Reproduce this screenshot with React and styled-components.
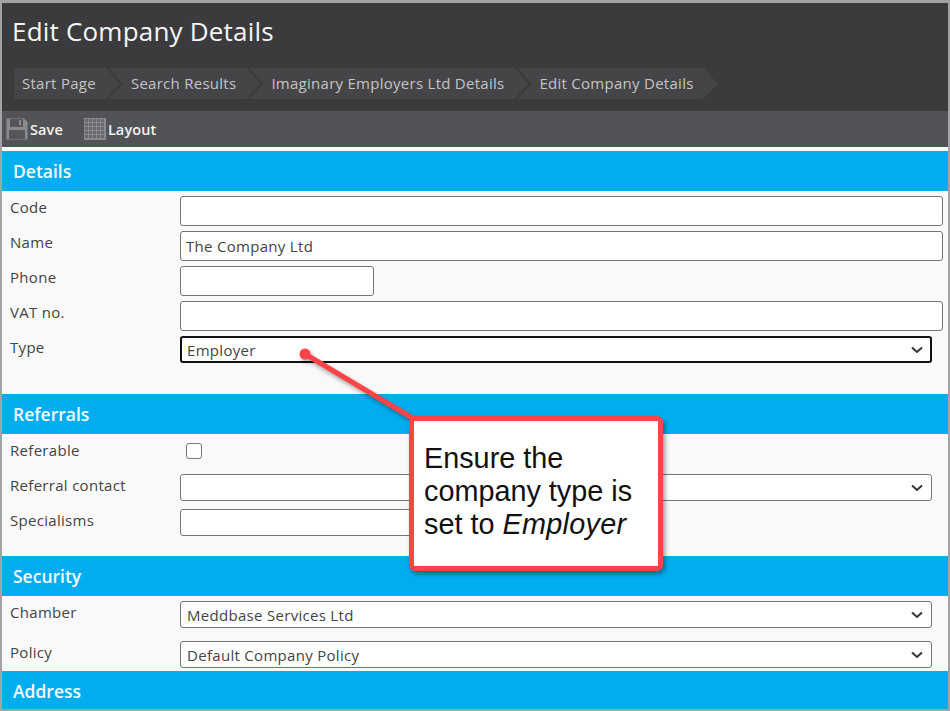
import React from "react";
import styled, { createGlobalStyle } from "styled-components";

const GlobalStyle = createGlobalStyle`
  html, body {
    margin: 0;
    padding: 0;
    background: #fff;
  }
`;

const Frame = styled.div`
  position: relative;
  box-sizing: border-box;
  width: 950px;
  height: 711px;
  overflow: hidden;
  background: #f9f9f9;
  border-style: solid;
  border-color: #a3a3a3;
  border-width: 3px 2px 2px;
  font-family: "Open Sans", sans-serif;
  font-size: 15px;
  letter-spacing: 0.3px;
  color: #444;
`;

const Header = styled.div`
  box-sizing: border-box;
  height: 108px;
  background: #3b3b3d;
  padding: 9px 0 0 10px;
`;

const Title = styled.h1`
  margin: 0;
  font-size: 26px;
  line-height: 38px;
  font-weight: 400;
  color: #f5f5f5;
  letter-spacing: 0.2px;
`;

const Crumbs = styled.div`
  display: flex;
  margin: 18px 0 0 2px;
`;

const Crumb = styled.div`
  box-sizing: border-box;
  height: 31px;
  line-height: 31px;
  padding: 0 24px 0 ${(p) => (p.$first ? "8px" : "22px")};
  margin-left: ${(p) => (p.$first ? "0" : "-11px")};
  background: #454547;
  color: #c4c4c6;
  font-size: 15px;
  letter-spacing: 0.27px;
  white-space: nowrap;
  clip-path: ${(p) =>
    p.$first
      ? "polygon(0 0, calc(100% - 14px) 0, 100% 50%, calc(100% - 14px) 100%, 0 100%)"
      : "polygon(0 0, calc(100% - 14px) 0, 100% 50%, calc(100% - 14px) 100%, 0 100%, 14px 50%)"};
`;

const Toolbar = styled.div`
  display: flex;
  align-items: center;
  gap: 21px;
  box-sizing: border-box;
  height: 36px;
  padding-left: 4px;
  background: #525356;
`;

const ToolButton = styled.div`
  display: flex;
  align-items: center;
  gap: 2px;
  color: #f2f2f2;
  font-size: 14.5px;
  line-height: 22px;
  font-weight: 600;
  letter-spacing: 0.1px;
`;

const ToolLabel = styled.span`
  padding-top: 1px;
`;

const Spacer = styled.div`
  height: 4px;
  background: #fff;
`;

const SectionHeader = styled.div`
  box-sizing: border-box;
  height: 40px;
  line-height: 40px;
  padding-left: 11px;
  background: #00aeef;
  color: #f4fbff;
  font-size: 17.5px;
  font-weight: 600;
  letter-spacing: 0;
`;

const SectionBody = styled.div`
  padding: 5px 5px ${(p) => p.$bottom}px 8px;
`;

const Row = styled.div`
  display: grid;
  grid-template-columns: 170px 1fr;
  align-items: start;
  height: ${(p) => p.$height || 35}px;
`;

const Label = styled.label`
  line-height: 22px;
`;

const TextInput = styled.input`
  display: block;
  box-sizing: border-box;
  width: ${(p) => p.$width || "100%"};
  height: ${(p) => p.$height || 30}px;
  padding: 0 5px;
  background: #fff;
  border: 1px solid #767676;
  border-radius: 3px;
  font: inherit;
  letter-spacing: inherit;
  color: #444;
  outline: none;
`;

const SelectWrap = styled.div`
  position: relative;
  width: calc(100% - 11px);
`;

const Select = styled.select`
  display: block;
  box-sizing: border-box;
  width: 100%;
  height: 27px;
  padding: 0 0 0 ${(p) => (p.$focused ? "5px" : "6px")};
  appearance: none;
  background-color: #fff;
  border: ${(p) => (p.$focused ? "2px solid #111" : "1px solid #767676")};
  border-radius: 3px;
  font: inherit;
  letter-spacing: inherit;
  color: #444;
  outline: none;
`;

const Chevron = styled.svg`
  position: absolute;
  right: 8px;
  top: 10px;
  pointer-events: none;
`;

const Checkbox = styled.input`
  display: block;
  width: 16px;
  height: 16px;
  margin: 4px 0 0 6px;
  appearance: none;
  background: #fff;
  border: 1px solid #767676;
  border-radius: 3px;
`;

const Callout = styled.div`
  position: absolute;
  left: 407px;
  top: 413px;
  box-sizing: border-box;
  width: 254px;
  height: 155px;
  padding: 21px 0 0 10px;
  background: #fff;
  border: 5px solid #ff4448;
  border-radius: 6px;
  box-shadow: 2px 3px 5px rgba(0, 0, 0, 0.4);
  font-family: "Liberation Sans", Arial, sans-serif;
  font-size: 28.8px;
  line-height: 33px;
  letter-spacing: 0;
  color: #111;
`;

const Emphasis = styled.em`
  letter-spacing: 0.3px;
`;

const Leader = styled.svg`
  position: absolute;
  left: 0;
  top: 0;
  filter: drop-shadow(2px 3px 2px rgba(0, 0, 0, 0.35));
`;

const SaveIcon = () => (
  <svg width="22" height="22" viewBox="0 0 22 22">
    <path d="M0.5 0.5H18L21.5 4V21.5H0.5Z" fill="#8b8b8d" />
    <rect x="4" y="1" width="13" height="8" fill="#55565a" />
    <rect x="13" y="2" width="2" height="5" fill="#8b8b8d" />
    <rect x="3" y="12" width="16" height="9" fill="#55565a" />
  </svg>
);

const GridIcon = () => (
  <svg width="22" height="22" viewBox="0 0 22 22">
    <rect width="22" height="22" fill="#8b8b8d" />
    {[1, 5, 9, 13, 17].flatMap((y) =>
      [1, 5, 9, 13, 17].map((x) => (
        <rect key={`${x}-${y}`} x={x} y={y} width="3" height="3" fill="#67686b" />
      ))
    )}
  </svg>
);

const Dropdown = ({ value, focused }) => (
  <SelectWrap>
    <Select $focused={focused} defaultValue={value}>
      <option>{value}</option>
    </Select>
    <Chevron width="14" height="8" viewBox="0 0 14 8">
      <path d="M2 1.5L7 6L12 1.5" fill="none" stroke="#333" strokeWidth="2" />
    </Chevron>
  </SelectWrap>
);

export default function App() {
  return (
    <Frame>
      <GlobalStyle />
      <Header>
        <Title>Edit Company Details</Title>
        <Crumbs>
          <Crumb $first>Start Page</Crumb>
          <Crumb>Search Results</Crumb>
          <Crumb>Imaginary Employers Ltd Details</Crumb>
          <Crumb>Edit Company Details</Crumb>
        </Crumbs>
      </Header>
      <Toolbar>
        <ToolButton>
          <SaveIcon />
          <ToolLabel>Save</ToolLabel>
        </ToolButton>
        <ToolButton>
          <GridIcon />
          <ToolLabel>Layout</ToolLabel>
        </ToolButton>
      </Toolbar>
      <Spacer />

      <SectionHeader>Details</SectionHeader>
      <SectionBody $bottom={23}>
        <Row>
          <Label>Code</Label>
          <TextInput readOnly value="" />
        </Row>
        <Row>
          <Label>Name</Label>
          <TextInput readOnly value="The Company Ltd" />
        </Row>
        <Row>
          <Label>Phone</Label>
          <TextInput readOnly value="" $width="194px" />
        </Row>
        <Row>
          <Label>VAT no.</Label>
          <TextInput readOnly value="" />
        </Row>
        <Row>
          <Label>Type</Label>
          <Dropdown value="Employer" focused />
        </Row>
      </SectionBody>

      <SectionHeader>Referrals</SectionHeader>
      <SectionBody $bottom={12}>
        <Row>
          <Label>Referable</Label>
          <Checkbox type="checkbox" />
        </Row>
        <Row>
          <Label>Referral contact</Label>
          <Dropdown value="" />
        </Row>
        <Row>
          <Label>Specialisms</Label>
          <TextInput readOnly value="" $width="300px" $height={27} />
        </Row>
      </SectionBody>

      <SectionHeader>Security</SectionHeader>
      <SectionBody $bottom={0}>
        <Row $height={40}>
          <Label>Chamber</Label>
          <Dropdown value="Meddbase Services Ltd" />
        </Row>
        <Row $height={30}>
          <Label>Policy</Label>
          <Dropdown value="Default Company Policy" />
        </Row>
      </SectionBody>

      <SectionHeader>Address</SectionHeader>

      <Leader width="946" height="706">
        <line x1="303" y1="351" x2="412" y2="416" stroke="#ff4448" strokeWidth="5" />
        <circle cx="303" cy="351" r="5.5" fill="#ff4448" />
      </Leader>
      <Callout>
        Ensure the
        <br />
        company type is
        <br />
        set to <Emphasis>Employer</Emphasis>
      </Callout>
    </Frame>
  );
}
